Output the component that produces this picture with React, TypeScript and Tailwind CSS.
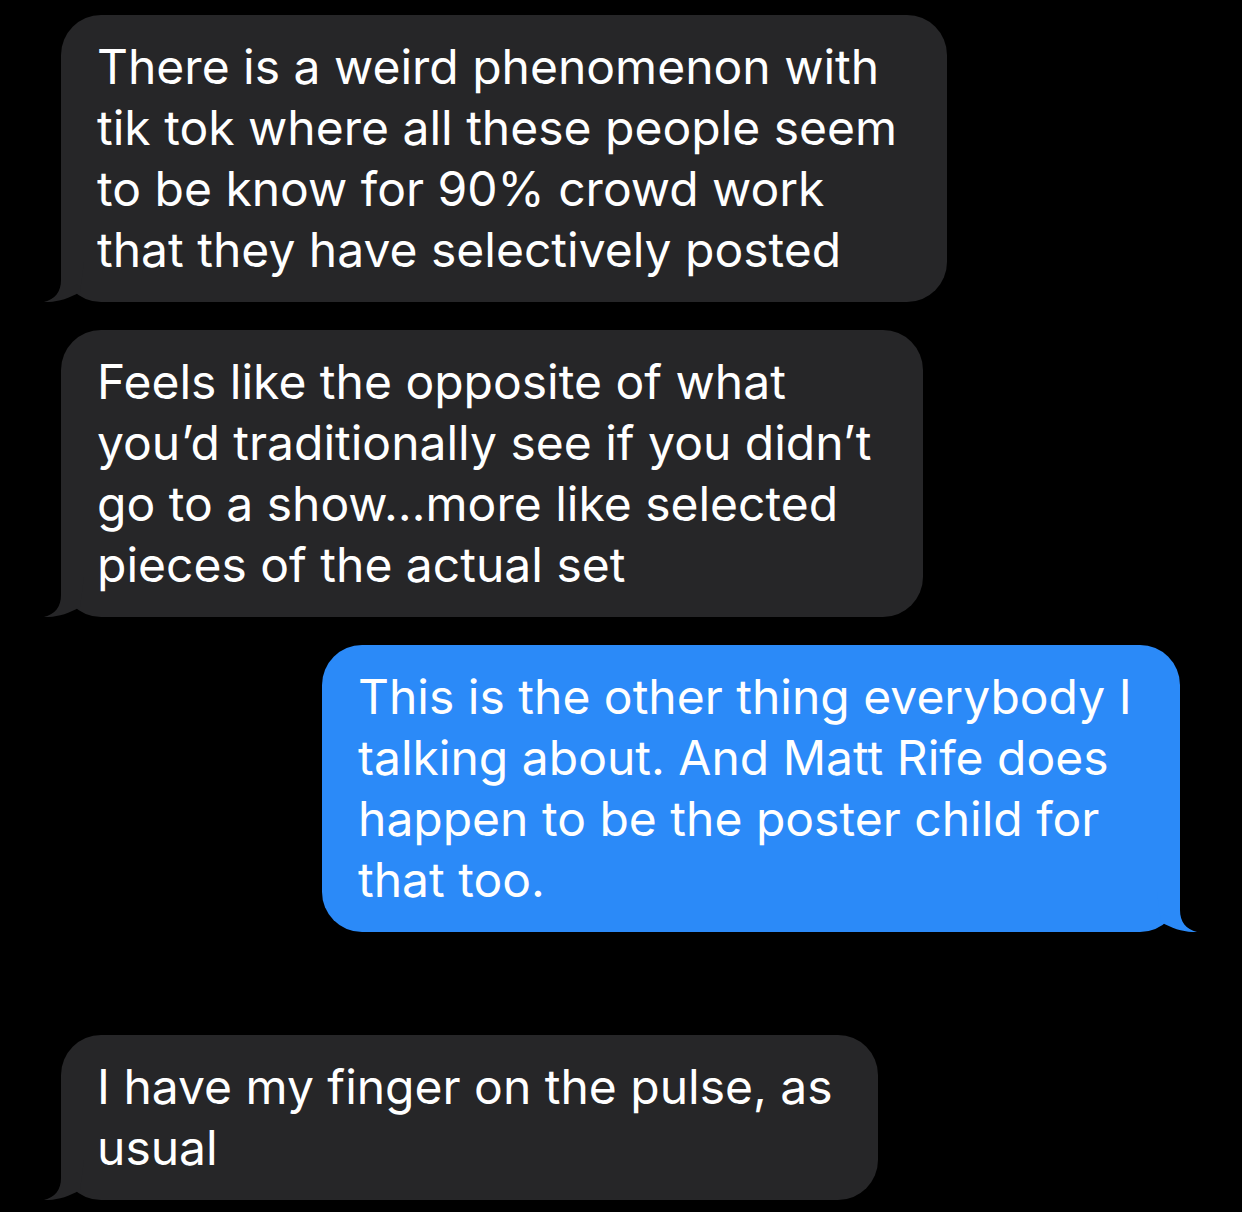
import React from "react";

type Side = "in" | "out";

interface Message {
  side: Side;
  lines: string[];
  width: string;
}

const messages: Message[] = [
  {
    side: "in",
    width: "w-[886px]",
    lines: [
      "There is a weird phenomenon with",
      "tik tok where all these people seem",
      "to be know for 90% crowd work",
      "that they have selectively posted",
    ],
  },
  {
    side: "in",
    width: "w-[862px]",
    lines: [
      "Feels like the opposite of what",
      "you\u2019d traditionally see if you didn\u2019t",
      "go to a show\u2026more like selected",
      "pieces of the actual set",
    ],
  },
  {
    side: "out",
    width: "w-[858px]",
    lines: [
      "This is the other thing everybody I",
      "talking about. And Matt Rife does",
      "happen to be the poster child for",
      "that too.",
    ],
  },
  {
    side: "in",
    width: "w-[817px]",
    lines: ["I have my finger on the pulse, as", "usual"],
  },
];

function Tail({ side }: { side: Side }) {
  if (side === "in") {
    return (
      <svg
        className="absolute bottom-0 left-[-17px] h-[40px] w-[57px] text-[#262628]"
        viewBox="0 0 57 40"
        fill="currentColor"
      >
        <path d="M17 0 L17 18 C17 30 11 37 0 40 C12 40.5 24 37 36 30 L40 0 Z" />
      </svg>
    );
  }
  return (
    <svg
      className="absolute bottom-0 right-[-17px] h-[40px] w-[57px] text-[#2b8af8]"
      viewBox="0 0 57 40"
      fill="currentColor"
    >
      <path d="M40 0 L40 18 C40 30 46 37 57 40 C45 40.5 33 37 21 30 L17 0 Z" />
    </svg>
  );
}

function Bubble({ message }: { message: Message }) {
  const isOut = message.side === "out";
  return (
    <div
      className={`relative ${message.width} ${
        isOut ? "self-end bg-[#2b8af8]" : "self-start bg-[#262628]"
      } rounded-[40px] pt-[21px] pb-[22px] pl-[36px] pr-[20px]`}
    >
      <Tail side={message.side} />
      <p className="relative text-[48px] leading-[61px] tracking-normal text-white">
        {message.lines.map((line, i) => (
          <span key={i} className="block whitespace-nowrap">
            {line}
          </span>
        ))}
      </p>
    </div>
  );
}

export default function App() {
  return (
    <div
      className="flex h-[1212px] w-full flex-col bg-black pl-[61px] pr-[62px] pt-[15px]"
      style={{ fontFamily: "Inter, 'Noto Sans', sans-serif" }}
    >
      <Bubble message={messages[0]} />
      <div className="h-[28px]" />
      <Bubble message={messages[1]} />
      <div className="h-[28px]" />
      <Bubble message={messages[2]} />
      <div className="h-[103px]" />
      <Bubble message={messages[3]} />
    </div>
  );
}
